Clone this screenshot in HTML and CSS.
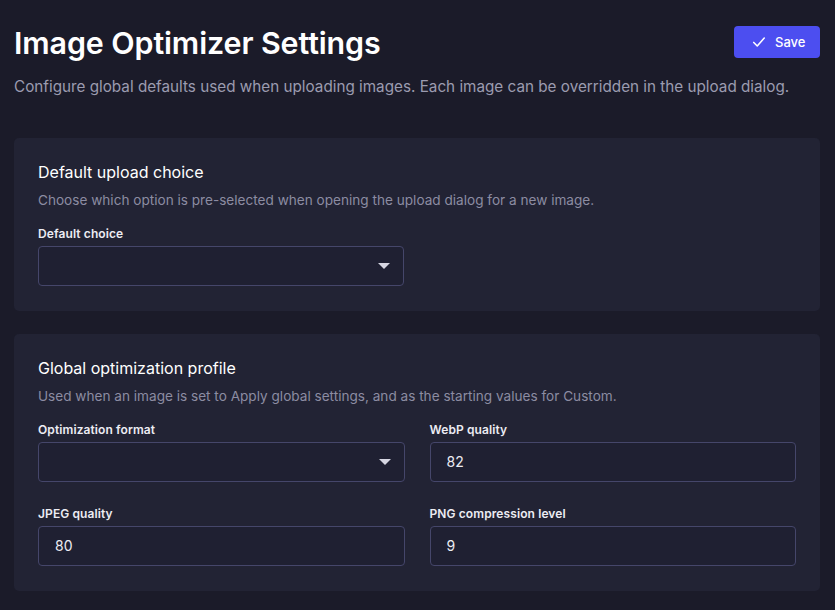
FILE: index.html
```html
<!doctype html>
<html>
<head>
<meta charset="utf-8">
<meta name="viewport" content="width=device-width, initial-scale=1.0">
<link rel="stylesheet" href="styles.css">
<title>Image Optimizer Settings</title>
</head>
<body>
<div class="page">
  <header class="page-head">
    <h1>Image Optimizer Settings</h1>
    <button class="btn-save" type="button">
      <svg width="14" height="14" viewBox="0 0 16 16" fill="none" stroke="currentColor" stroke-width="1.8" stroke-linecap="round" stroke-linejoin="round"><path d="M2 8.5l4 4 8-9"/></svg>
      Save
    </button>
  </header>
  <p class="lead">Configure global defaults used when uploading images. Each image can be overridden in the upload dialog.</p>

  <section class="card">
    <h2>Default upload choice</h2>
    <p class="hint">Choose which option is pre-selected when opening the upload dialog for a new image.</p>
    <div class="field half">
      <label>Default choice</label>
      <div class="select"><span class="caret"></span></div>
    </div>
  </section>

  <section class="card">
    <h2>Global optimization profile</h2>
    <p class="hint">Used when an image is set to Apply global settings, and as the starting values for Custom.</p>
    <div class="grid">
      <div class="field">
        <label>Optimization format</label>
        <div class="select"><span class="caret"></span></div>
      </div>
      <div class="field">
        <label>WebP quality</label>
        <div class="input">82</div>
      </div>
      <div class="field">
        <label>JPEG quality</label>
        <div class="input">80</div>
      </div>
      <div class="field">
        <label>PNG compression level</label>
        <div class="input">9</div>
      </div>
    </div>
  </section>
</div>
</body>
</html>
```

FILE: styles.css
```css
* {
    box-sizing: border-box;
}
h1,
h2,
p {
    margin: 0;
    padding: 0;
}
body {
    margin: 0;
    background-color: #1b1b29;
    color: #ececf2;
    font-family: Inter, "Noto Sans", sans-serif;
}
.page {
    padding: 25px 15px 20px 14px;
}
.page-head {
    display: flex;
    justify-content: space-between;
    align-items: flex-start;
}
h1 {
    font-size: 30.4px;
    line-height: 36px;
    font-weight: 600;
    color: #ffffff;
    letter-spacing: -0.1px;
}
.btn-save {
    display: flex;
    align-items: center;
    gap: 9px;
    height: 32px;
    width: 86px;
    margin-top: 1px;
    padding: 0 0 0 18px;
    border: none;
    border-radius: 4px;
    background-color: #4c4ef0;
    color: #ffffff;
    font-family: inherit;
    font-size: 13px;
    font-weight: 500;
}
.lead {
    margin-top: 15px;
    font-size: 15.25px;
    line-height: 22px;
    color: #9b9bb0;
}
.card {
    margin-top: 23px;
    padding: 24px 24px 25px;
    background-color: #222334;
    border-radius: 5px;
}
.page > .lead + .card {
    margin-top: 40px;
}
h2 {
    font-size: 16px;
    line-height: 20px;
    font-weight: 400;
    color: #ffffff;
}
.hint {
    margin-top: 8px;
    font-size: 13.6px;
    line-height: 20px;
    color: #8c8ca2;
}
.field {
    margin-top: 16px;
}
.half {
    width: 366px;
}
label {
    display: block;
    font-size: 12px;
    line-height: 16px;
    font-weight: 600;
    letter-spacing: 0.1px;
    color: #ececf3;
    margin-bottom: 4px;
}
.select,
.input {
    position: relative;
    height: 40px;
    border: 1px solid #45466a;
    border-radius: 4px;
    background-color: #1f2032;
    font-size: 14px;
    line-height: 38px;
    padding-left: 16px;
    color: #ececf2;
}
.caret {
    position: absolute;
    right: 13px;
    top: 16px;
    width: 0;
    height: 0;
    border-left: 6px solid transparent;
    border-right: 6px solid transparent;
    border-top: 6px solid #d6d6e2;
}
.grid {
    display: grid;
    grid-template-columns: 1fr 1fr;
    column-gap: 25px;
    row-gap: 24px;
    margin-top: 16px;
}
.grid .field {
    margin-top: 0;
}
```
